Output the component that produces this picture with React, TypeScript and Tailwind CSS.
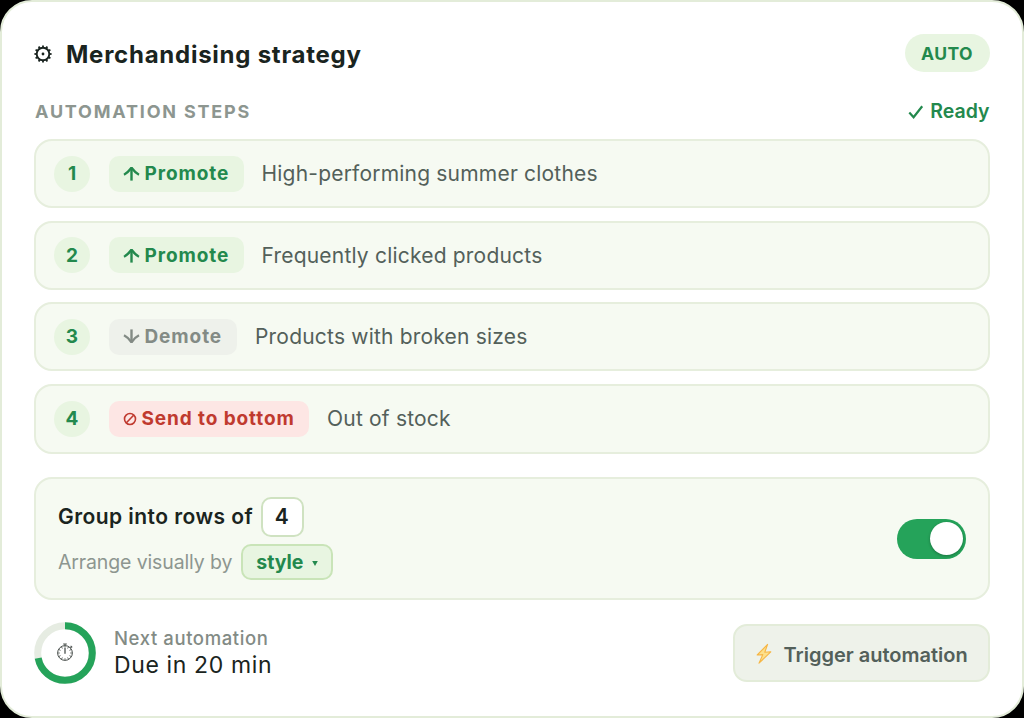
import { useState } from "react";
import clsx from "clsx";

interface Step {
  kind: "promote" | "demote" | "bottom";
  label: string;
  text: string;
}

const steps: Step[] = [
  { kind: "promote", label: "Promote", text: "High-performing summer clothes" },
  { kind: "promote", label: "Promote", text: "Frequently clicked products" },
  { kind: "demote", label: "Demote", text: "Products with broken sizes" },
  { kind: "bottom", label: "Send to bottom", text: "Out of stock" },
];

function GearIcon() {
  const teeth = [0, 30, 60, 90, 120, 150, 180, 210, 240, 270, 300, 330];

  return (
    <svg width="18" height="18" viewBox="0 0 18 18" fill="none" stroke="#1a2420" className="mt-0.5">
      <circle cx="9" cy="9" r="6.3" strokeWidth="1.9" />
      <circle cx="9" cy="9" r="1.4" fill="#1a2420" stroke="none" />
      {teeth.map((angle) => (
        <path
          key={angle}
          d="M9 2.6V0.4"
          strokeWidth="1.8"
          transform={`rotate(${angle} 9 9)`}
        />
      ))}
    </svg>
  );
}

function CheckIcon() {
  return (
    <svg width="16" height="16" viewBox="0 0 16 16" fill="none" stroke="#23894d" strokeWidth="2.2">
      <path d="M1.3 8.4L5.6 13.2L14.2 2.2" />
    </svg>
  );
}

function StepIcon({ kind }: { kind: Step["kind"] }) {
  if (kind === "bottom") {
    return (
      <svg width="14" height="14" viewBox="0 0 14 14" fill="none" stroke="currentColor" strokeWidth="1.6" className="mt-px">
        <circle cx="7" cy="7" r="5.5" />
        <path d="M3.4 10.8L10.6 3.2" />
      </svg>
    );
  }

  return (
    <svg
      width="17"
      height="15"
      viewBox="0 0 17 15"
      fill="none"
      stroke="currentColor"
      strokeWidth="2.4"
      className={clsx(kind === "demote" && "rotate-180")}
    >
      <path d="M8.5 14.6V1.6" />
      <path d="M1 8.7C4 7.2 6.4 4.6 8.5 1.8C10.6 4.6 13 7.2 16 8.7" strokeLinejoin="bevel" />
    </svg>
  );
}

function StopwatchIcon() {
  const ticks = [0, 30, 60, 90, 120, 150, 180, 210, 240, 270, 300, 330];

  return (
    <svg width="18" height="20" viewBox="0 0 18 20" fill="none" stroke="#4a504d" className="-mt-0.5">
      <circle cx="9" cy="11" r="7.4" strokeWidth="1" />
      <path d="M9 3.6V2.2M7.2 2H10.8M14.3 5.7L15.4 4.6M14.6 3.8L16.2 5.4" strokeWidth="1.1" />
      <path d="M9 11.8V6" strokeWidth="1.3" />
      {ticks.map((angle) => (
        <path
          key={angle}
          d="M9 5.8V4"
          strokeWidth="0.8"
          transform={`rotate(${angle} 9 11)`}
        />
      ))}
    </svg>
  );
}

function BoltIcon() {
  return (
    <svg width="16" height="22" viewBox="0 0 16 22" fill="#fde08a" stroke="#f6b645" strokeWidth="1.1" strokeLinejoin="round" className="mt-0.5">
      <path d="M11.6 1.4L1.2 12L6.8 11.6L3 20.2L14.8 8.8L8.8 9.2Z" />
    </svg>
  );
}

function StepRow({ step, number }: { step: Step; number: number }) {
  return (
    <div
      className={clsx(
        "flex items-center rounded-[18px] border-2 border-[#e6eedd] bg-[#f6faf2] pl-[18px]",
        step.kind === "bottom" ? "h-[70px]" : "h-[69px]"
      )}
    >
      <span className="flex size-9 items-center justify-center rounded-full bg-[#e8f5e1] pt-0.5 text-[19px] font-bold text-[#23894d]">
        {number}
      </span>

      <span
        className={clsx(
          "ml-[18.5px] flex h-9 items-center gap-[5px] whitespace-nowrap rounded-[10px] pl-3.5 text-[19px] font-bold",
          step.kind === "promote" && "w-[135px] bg-[#e8f5e1] text-[#23894d]",
          step.kind === "demote" && "w-[128.5px] bg-[#eef1eb] text-[#838b85]",
          step.kind === "bottom" && "w-[200.5px] bg-[#fde6e4] text-[#c03a2f]"
        )}
      >
        <StepIcon kind={step.kind} />
        <span className="pt-0.5 tracking-[0.9px]">
          {step.label}
        </span>
      </span>

      <span className="ml-[18px] whitespace-nowrap pt-px text-[21px] tracking-[0.2px] text-[#53605a]">
        {step.text}
      </span>
    </div>
  );
}

export default function App() {
  const [enabled, setEnabled] = useState(true);

  return (
    <div className="h-[718px] w-[1024px] bg-black font-[Inter,sans-serif]">
      <div className="flex h-full flex-col rounded-[32px] border-2 border-[#e3ecd9] bg-white pt-8 pr-[32.5px] pl-8">

        <div className="flex h-[38px] items-center justify-between">
          <div className="flex items-center gap-3.5 whitespace-nowrap">
            <GearIcon />
            <h1 className="pt-1 text-[24px] font-bold tracking-[0.75px] text-[#1a2420]">
              Merchandising strategy
            </h1>
          </div>
          <span className="flex h-[38px] w-[85px] items-center justify-center rounded-full bg-[#e8f5e1] pt-0.5 text-[17.5px] font-bold tracking-[0.5px] text-[#23894d]">
            AUTO
          </span>
        </div>

        <div className="mt-[25px] flex h-7 items-center justify-between">
          <h2 className="pl-px text-[18px] font-bold tracking-[1.8px] text-[#8d9690]">
            AUTOMATION STEPS
          </h2>
          <span className="flex items-center gap-1.5 pt-0.5 text-[19.5px] font-semibold text-[#23894d]">
            <CheckIcon />
            Ready
          </span>
        </div>

        <div className="mt-[14px] flex flex-col gap-[12.5px]">
          {steps.map((step, index) => (
            <StepRow key={index} step={step} number={index + 1} />
          ))}
        </div>

        <div className="mt-[23.5px] flex h-[123px] items-center justify-between rounded-[18px] border-2 border-[#e6eedd] bg-[#f6faf2] px-[22px]">
          <div className="flex flex-col gap-[7px] whitespace-nowrap">
            <div className="flex items-center gap-2 text-[21px] font-semibold text-[#1a2420]">
              <span className="tracking-[0.45px]">Group into rows of</span>
              <span className="flex h-10 w-[43px] items-center justify-center rounded-[10px] border-2 border-[#cfe2c1] bg-white pr-0.5">
                4
              </span>
            </div>
            <div className="flex items-center gap-[9px] text-[19.5px] text-[#8d9690]">
              <span className="pt-0.5 tracking-[-0.13px]">Arrange visually by</span>
              <span className="flex h-9 w-[92px] items-center gap-[9px] rounded-[10px] border-2 border-[#c9e4b8] bg-[#e8f5e1] pt-0.5 pl-[13px] font-bold text-[#23894d]">
                style
                <svg width="6" height="5" viewBox="0 0 6 5" fill="#23894d">
                  <path d="M0.2 0H5.8L3 5Z" />
                </svg>
              </span>
            </div>
          </div>

          <button
            onClick={() => setEnabled(!enabled)}
            className={clsx(
              "flex h-10 w-[69px] items-center rounded-full px-[3px]",
              enabled ? "justify-end bg-[#25a35a]" : "justify-start bg-[#cfd8cb]"
            )}
          >
            <span className="size-[33px] rounded-full bg-white shadow-[0_1px_3px_rgba(0,0,0,0.3)]" />
          </button>
        </div>

        <div className="mt-[22px] flex h-[62px] items-center justify-between">
          <div className="flex items-center gap-[18px] whitespace-nowrap">
            <div className="grid size-[62px] place-items-center">
              <svg width="62" height="62" viewBox="0 0 62 62" fill="none" strokeWidth="7" className="col-start-1 row-start-1">
                <circle cx="31" cy="31" r="27.3" stroke="#e6ece2" />
                <circle
                  cx="31"
                  cy="31"
                  r="27.3"
                  stroke="#25a35a"
                  pathLength="100"
                  strokeDasharray="72 100"
                  transform="rotate(-90 31 31)"
                />
              </svg>
              <div className="col-start-1 row-start-1">
                <StopwatchIcon />
              </div>
            </div>
            <div className="pb-[3px]">
              <p className="text-[18.5px] leading-[26px] font-medium tracking-[0.6px] text-[#838b85]">
                Next automation
              </p>
              <p className="text-[23px] leading-7 tracking-[0.63px] text-[#1a2420]">
                Due in 20 min
              </p>
            </div>
          </div>

          <button className="flex h-[58px] w-[257px] items-center gap-3 whitespace-nowrap rounded-[14px] border-2 border-[#e3ecd9] bg-[#eef2ea] pl-[21px] text-[20px] font-semibold text-[#53605a]">
            <BoltIcon />
            <span className="pt-[3px]">Trigger automation</span>
          </button>
        </div>

      </div>
    </div>
  );
}
